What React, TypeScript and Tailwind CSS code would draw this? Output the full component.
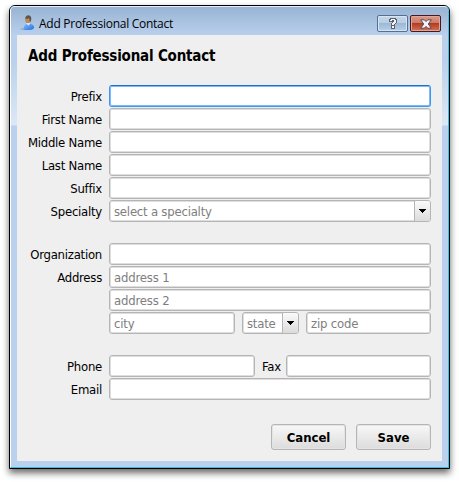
import React from "react";

const labelFont = "font-['DejaVu_Sans_Condensed','DejaVu_Sans',sans-serif] [font-stretch:condensed]";

const fieldBase =
  "h-[22px] rounded-[3px] border border-[#b5b5b5] bg-white shadow-[inset_0_0_0_1px_#dedede] outline-none px-1 pt-px text-[13px] tracking-[-0.18px] text-black placeholder:text-[#7e7e7e] placeholder:opacity-100";

function Field({ className = "", placeholder, focused = false }: { className?: string; placeholder?: string; focused?: boolean }) {
  const tone = focused
    ? "h-[22px] rounded-[3px] border border-[#3f96f5] border-t-[#1b6fce] bg-white shadow-[inset_0_0_0_1px_#7db9fa] outline-none px-1 text-[13px]"
    : fieldBase;
  return <input className={`block min-w-0 ${tone} ${className}`} placeholder={placeholder} />;
}

function Select({ text, className = "" }: { text: string; className?: string }) {
  return (
    <div className={`flex h-[22px] overflow-hidden rounded-[3px] border border-[#b5b5b5] bg-white shadow-[inset_0_0_0_1px_#dedede] ${className}`}>
      <span className="flex-1 whitespace-nowrap pl-1 text-[13px] leading-[21px] tracking-[-0.22px] text-[#7e7e7e]">{text}</span>
      <span className="flex w-4 shrink-0 items-center justify-center border-l border-[#b5b5b5] bg-gradient-to-b from-[#fafafa] to-[#dcdcdc]">
        <svg width="7" height="4" viewBox="0 0 7 4" shapeRendering="crispEdges">
          <path d="M0 0h7v1h-1v1h-1v1h-1v1h-1v-1h-1v-1h-1v-1h-1z" />
        </svg>
      </span>
    </div>
  );
}

function Row({ label = "", children }: { label?: string; children: React.ReactNode }) {
  return (
    <div className="flex h-[22px]">
      <span className="w-[85px] shrink-0 whitespace-nowrap text-right text-[13px] leading-[24px] tracking-[-0.25px] text-black">{label}</span>
      <div className="ml-[7px] flex w-[322px]">{children}</div>
    </div>
  );
}

function PersonIcon() {
  return (
    <svg width="16" height="17" viewBox="0 0 16 17">
      <defs>
        <linearGradient id="shirt" x1="0" y1="0" x2="1" y2="1">
          <stop offset="0" stopColor="#87c2fb" />
          <stop offset="1" stopColor="#1c6fdc" />
        </linearGradient>
      </defs>
      <ellipse cx="6" cy="15" rx="6" ry="1.2" fill="#6288b9" opacity=".4" />
      <path d="M3.5 15.3c.1-2.4 1-4.500 3-5.500l3-.5c2 .6 4.500 1.700 4.700 4.300-.3 1.700-2 2.400-5 2.500-2.500 0-4.700-.1-5.700-.8z" fill="url(#shirt)" />
      <path d="M6.300 9.500l1-1.500h2.400l.4 1.400-1.500 2.100z" fill="#e9edf0" />
      <ellipse cx="8" cy="5.800" rx="2.800" ry="3.500" fill="#b98963" />
      <path d="M5.200 4.800c0-2.300 1.300-3.600 3.100-3.600 2 0 3.100 1.500 3 3.500 0 1.500-.6 3-1.300 3.400-.2-1.500-.5-2.500-1.200-3.900-1.200.5-2.300.7-3.600.6z" fill="#625746" />
    </svg>
  );
}

function HelpIcon() {
  return (
    <svg width="8" height="11" viewBox="0 0 8 11" fill="#5c6370" shapeRendering="crispEdges">
      <path d="M1 0h6v1h1v4h-1v1h-1v5h-4v-6h1v-1h-3v-3h1z" />
      <path d="M2 1h4v1h1v3h-1v1h-1v1h-2v-2h1v-1h1v-2h-2v1h-2v-1h1zM3 8h2v2h-2z" fill="#f5f5f5" />
    </svg>
  );
}

function CloseIcon() {
  return (
    <svg width="12" height="10" viewBox="0 0 12 10">
      <path d="M.7.800h3.600L6 2.600 7.700.800h3.600L8.300 5l3 4.200H7.700L6 7.400 4.300 9.200H.7l3-4.200z" fill="#f4f4f4" stroke="#514b57" strokeWidth="1" strokeLinejoin="round" />
    </svg>
  );
}

export default function App() {
  return (
    <main className={`h-[482px] w-[459px] overflow-hidden bg-white pl-[9px] pt-[5px] ${labelFont}`}>
      <section className="h-[464px] w-[441px] rounded-t-[6px] border border-black bg-[#b9d1ec] shadow-[0_4px_7px_rgba(0,0,0,0.6)]">
        <div className="flex h-full flex-col rounded-t-[5px] border border-b-[#3fbbdd] border-l-white border-r-[#35c5ec] border-t-[#e2edf8] bg-[#b9d1ec]">
          <header className="flex h-[28px] shrink-0 rounded-t-[4px] bg-gradient-to-b from-[#98b4d2] to-[#b9d0ed] pl-[9px] pr-[7px]">
            <div className="mt-[7px]"><PersonIcon /></div>
            <span className="ml-[3px] mt-[8px] whitespace-nowrap font-['Open_Sans','Noto_Sans',sans-serif] text-[12px] leading-[17px] tracking-[-0.27px] text-black [font-stretch:normal]">Add Professional Contact</span>
            <div className="ml-auto mt-[8px] flex gap-[2px]">
              <button aria-label="Help" className="flex h-[17px] w-[31px] items-center justify-center rounded-[2px] border border-[#536f92] bg-[linear-gradient(#c3d5e9_0%,#b8cde4_48%,#9cb8d6_49%,#b8d0e9_100%)] shadow-[inset_0_0_0_1px_#d6e5f5]"><HelpIcon /></button>
              <button aria-label="Close" className="flex h-[17px] w-[31px] items-center justify-center rounded-[2px] border border-[#4b1521] bg-[linear-gradient(#d99a8b_0%,#cb7966_48%,#b33a21_49%,#cf7456_100%)] shadow-[inset_0_0_0_1px_#e3a596]"><CloseIcon /></button>
            </div>
          </header>
          <div className="flex min-h-0 flex-1 bg-[linear-gradient(#b9d1ec_0,#b9d1ec_25px,#dce8f6_90px,#b9d1ec_91px)] px-[6px] pb-[6px]">
            <div className="w-full bg-[#efefef]">
              <h1 className="ml-[11px] mt-[10px] h-[22px] whitespace-nowrap text-[15px] font-bold leading-[22px] tracking-[-0.2px]">Add Professional Contact</h1>
              <form className="mt-[18px] flex flex-col" onSubmit={(event) => event.preventDefault()}>
                <div className="flex flex-col gap-px">
                  <Row label="Prefix"><Field className="w-full" focused /></Row>
                  <Row label="First Name"><Field className="w-full" /></Row>
                  <Row label="Middle Name"><Field className="w-full" /></Row>
                  <Row label="Last Name"><Field className="w-full" /></Row>
                  <Row label="Suffix"><Field className="w-full" /></Row>
                  <Row label="Specialty"><Select text="select a specialty" className="w-full" /></Row>
                </div>
                <div className="mt-[21px] flex flex-col gap-px">
                  <Row label="Organization"><Field className="w-full" /></Row>
                  <Row label="Address"><Field className="w-full" placeholder="address 1" /></Row>
                  <Row><Field className="w-full" placeholder="address 2" /></Row>
                  <Row>
                    <Field className="w-[126px]" placeholder="city" />
                    <Select text="state" className="ml-[7px] w-[57px]" />
                    <Field className="ml-[7px] w-[125px]" placeholder="zip code" />
                  </Row>
                </div>
                <div className="mt-[21px] flex flex-col gap-px">
                  <Row label="Phone">
                    <Field className="w-[146px]" />
                    <span className="w-[31px] pl-[7px] text-[13px] leading-[24px] tracking-[-0.2px]">Fax</span>
                    <Field className="w-[145px]" />
                  </Row>
                  <Row label="Email"><Field className="w-full" /></Row>
                </div>
                <div className="mr-[11px] mt-[24px] flex justify-end gap-[10px] text-[13px] font-bold">
                  {["Cancel", "Save"].map((text) => (
                    <button key={text} type="button" className="h-[26px] w-[75px] rounded-[3px] border border-[#b5b5b5] bg-gradient-to-b from-[#f8f8f8] to-[#dcdcdc] pt-px leading-[24px] shadow-[inset_0_0_0_1px_#e4e4e4]">{text}</button>
                  ))}
                </div>
              </form>
            </div>
          </div>
        </div>
      </section>
    </main>
  );
}
